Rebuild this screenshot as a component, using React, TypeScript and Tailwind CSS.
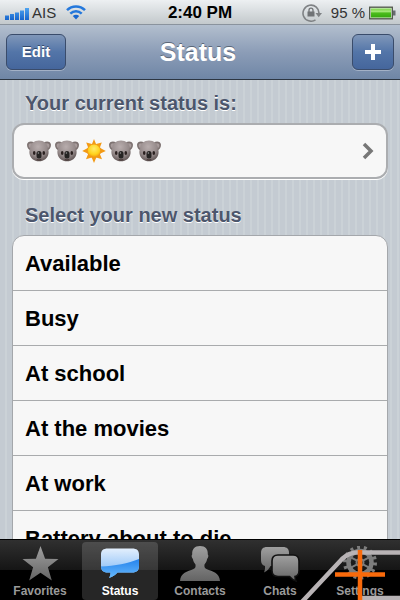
const statuses = ['Available', 'Busy', 'At school', 'At the movies', 'At work', 'Battery about to die'];

const Koala = () => (
  <svg width="26" height="24" viewBox="0 0 26 24" aria-hidden="true">
    <defs>
      <radialGradient id="fur" cx="0.45" cy="0.3" r="0.75">
        <stop offset="0" stopColor="#b8adad" />
        <stop offset="0.6" stopColor="#968b8b" />
        <stop offset="1" stopColor="#594e4d" />
      </radialGradient>
    </defs>
    <path d="M8 3.500C5.500 1.500 1 2.500 1 5.800c0 3 1.500 5.200 4 5.700zM18 3.500c2.500-2 7-1 7 2.300 0 3-1.500 5.200-4 5.700z" fill="#7d7271" />
    <path d="M7 4.800C5.200 3.600 2.600 4 2.600 6.200c0 1.500.7 2.500 1.800 3zM19 4.800c1.800-1.200 4.400-.8 4.400 1.400 0 1.500-.7 2.500-1.800 3z" fill="#a79b9b" />
    <path d="M13 1.500C8 1.500 4.800 4.300 4.200 9c-.7 1.700-1 3.500-.7 5.500.7 4.700 4.500 7.800 9.500 7.800s8.800-3.100 9.500-7.800c.3-2 0-3.800-.7-5.500C21.200 4.300 18 1.500 13 1.500z" fill="url(#fur)" />
    <ellipse cx="8.200" cy="14" rx="1.300" ry="1.900" fill="#2b2120" />
    <ellipse cx="17.800" cy="14" rx="1.300" ry="1.900" fill="#2b2120" />
    <rect x="10.500" y="12" width="5" height="7.500" rx="2.500" fill="#252322" />
    <path d="M10.800 20.500c1.300.7 3.100.7 4.400 0" stroke="#3d2c2b" strokeWidth="1" fill="none" />
    <ellipse cx="12.400" cy="13.900" rx="0.800" ry="1" fill="#777" />
  </svg>
);

const Sun = () => (
  <svg width="24" height="24" viewBox="0 0 24 24" aria-hidden="true">
    <defs>
      <radialGradient id="sun" cx="0.5" cy="0.35" r="0.6">
        <stop offset="0" stopColor="#ffec6b" />
        <stop offset="0.7" stopColor="#ffd21c" />
        <stop offset="1" stopColor="#f3a012" />
      </radialGradient>
    </defs>
    <path
      d="M12 0l2 4.900L19.800 3.500l-2 5.200L23.800 12l-6 2.800 2.200 5.500-5.700-1.800L12 23.900l-2.300-5.400L4 20.300l2.200-5.500L.2 12l6-3.300-2-5.200L10 4.900z"
      fill="#f39a14"
    />
    <circle cx="12" cy="11.800" r="6.700" fill="url(#sun)" stroke="#ef951a" strokeWidth="0.800" />
  </svg>
);

const SignalIcon = () => (
  <svg width="26" height="14" viewBox="0 0 26 14" aria-hidden="true">
    <defs>
      <linearGradient id="signal" x1="0" x2="0" y1="0" y2="1">
        <stop offset="0" stopColor="#4fa4f0" />
        <stop offset="1" stopColor="#1664cc" />
      </linearGradient>
    </defs>
    <path d="M1 9.500h4V14H1zM6 8h4v6H6zM11 6.500h4V14h-4zM16 4.500h4V14h-4zM21 2h4v12h-4z" fill="url(#signal)" />
  </svg>
);

const WifiIcon = () => (
  <svg width="20" height="15" viewBox="0 0 20 15" aria-hidden="true">
    <g fill="none" stroke="#2478dc" strokeWidth="2.500">
      <path d="M1 5.200C6 0.200 14 0.200 19 5.200" />
      <path d="M4.300 8.600c3.300-3.200 8.100-3.200 11.400 0" />
    </g>
    <path d="M10 14.500l-3.200-3.600c1.800-1.600 4.600-1.600 6.400 0z" fill="#1766cf" />
  </svg>
);

const RotationLockIcon = () => (
  <svg width="22" height="18" viewBox="0 0 22 18" aria-hidden="true">
    <path d="M14.500 15.800A8 8 0 1 1 18 9.500" fill="none" stroke="#7f8285" strokeWidth="1.600" />
    <path d="M14.500 9h6.500l-3.300 4.200z" fill="#7f8285" />
    <rect x="6.500" y="7.500" width="7" height="5" fill="#707376" />
    <path d="M8 8V6.200a2 2 0 0 1 4 0V8" fill="none" stroke="#707376" strokeWidth="1.300" />
  </svg>
);

const BatteryIcon = () => (
  <svg width="27" height="14" viewBox="0 0 27 14" aria-hidden="true">
    <defs>
      <linearGradient id="charge" x1="0" x2="0" y1="0" y2="1">
        <stop offset="0" stopColor="#7fd44c" />
        <stop offset="0.350" stopColor="#a4e878" />
        <stop offset="0.500" stopColor="#4cbd1c" />
        <stop offset="1" stopColor="#35a80d" />
      </linearGradient>
    </defs>
    <rect x="0.700" y="1.200" width="22.600" height="11.600" fill="#e5f3df" stroke="#4e5548" strokeWidth="1.300" />
    <rect x="2" y="2.500" width="20" height="9" fill="url(#charge)" />
    <path d="M24 4.500h2.500v5H24z" fill="#666b6e" />
  </svg>
);

const Gradients = () => (
  <svg className="absolute size-0" aria-hidden="true">
    <defs>
      <linearGradient id="metal" x1="0" x2="0" y1="0" y2="1">
        <stop offset="0" stopColor="#a0a0a0" />
        <stop offset="1" stopColor="#646464" />
      </linearGradient>
      <linearGradient id="bubble" x1="0" x2="0" y1="0" y2="1">
        <stop offset="0" stopColor="#e3effd" />
        <stop offset="1" stopColor="#74b3f5" />
      </linearGradient>
      <linearGradient id="bubbleShade" x1="0" x2="0" y1="0" y2="1">
        <stop offset="0" stopColor="#2583ec" />
        <stop offset="1" stopColor="#66b8fc" />
      </linearGradient>
    </defs>
  </svg>
);

const StarIcon = () => (
  <svg width="40" height="36" viewBox="0 0 40 36" aria-hidden="true">
    <path d="M20.500 0l4.600 12.700 13.400.3-10.600 8.200 3.900 13.300-11.300-7.700-11.300 7.700 3.900-13.300L2.500 13l13.400-.3z" fill="url(#metal)" />
  </svg>
);

const BubbleIcon = () => (
  <svg width="40" height="36" viewBox="0 0 40 36" aria-hidden="true">
    <path d="M8 2.500h24c5 0 7 2 7 6v11c0 5-2 7-7 7H17.500c-2 2.500-5 4.500-8.500 5.500 1-1.500 1.500-3.500 1.500-5.500H8c-5 0-7-2-7-7v-11c0-4 2-6 7-6z" fill="url(#bubble)" />
    <path d="M1 20.500c14-.5 27-3 38-7.500v6.500c0 5-2 7-7 7H17.500c-2 2.500-5 4.500-8.500 5.500 1-1.500 1.500-3.500 1.500-5.500H8c-4.500 0-6.800-2-7-6z" fill="url(#bubbleShade)" />
  </svg>
);

const ContactIcon = () => (
  <svg width="40" height="36" viewBox="0 0 40 36" aria-hidden="true">
    <path d="M20 0c5.500 0 8 3 7.800 8.500.9.700.7 3-.7 4.500-.4 2.500-1.500 4-2.600 5.500-.3 2.500 0 3.500 2 4.500 6 2.500 13 3.500 13.500 12H0c.5-8.500 7.500-9.500 13.500-12 2-1 2.300-2 2-4.500-1.100-1.500-2.200-3-2.600-5.500-1.400-1.500-1.600-3.800-.7-4.500C12 3 14.500 0 20 0z" fill="url(#metal)" />
  </svg>
);

const ChatsIcon = () => (
  <svg width="40" height="36" viewBox="0 0 40 36" aria-hidden="true">
    <path d="M7 1h16c4 0 6 2 6 6v7c0 4-2 6-6 6H10.500C9.500 22.500 7 25 4 26.500c.8-2 1.200-4 1-6.600-2.700-.6-4-2.600-4-5.900V7c0-4 2-6 6-6z" fill="url(#metal)" />
    <path d="M18 9h15c4 0 6 2 6 6v9.500c0 3.500-1.300 5.500-4 6 .1 1.500.3 3 1 4.500-3-1-5-2.500-6.500-4.500H18c-4 0-6-2-6-6V15c0-4 2-6 6-6z" fill="url(#metal)" stroke="#101010" strokeWidth="1.600" />
  </svg>
);

const GearIcon = () => (
  <svg width="40" height="36" viewBox="0 0 40 36" aria-hidden="true">
    <g fill="none" stroke="#7d7d7d">
      <circle cx="20" cy="16.500" r="15" strokeWidth="4" strokeDasharray="2.900 3.832" />
      <circle cx="20" cy="16.500" r="11.500" strokeWidth="4.500" />
      <circle cx="20" cy="16.500" r="3.500" strokeWidth="2" />
      <path d="M20 4v9M20 20v9M9 10.300l8 4.400M31 10.300l-8 4.400M9 22.700l8-4.400M31 22.700l-8-4.400" strokeWidth="2" />
    </g>
  </svg>
);

const RouteMark = () => (
  <svg className="absolute right-0 bottom-0 pointer-events-none" width="100" height="50" viewBox="0 0 100 50" aria-hidden="true">
    <path d="M0 54L42 9q7-6.500 15-6.500h43M62 48h38" fill="none" stroke="#b8b3b5" strokeWidth="4.500" />
    <path d="M60 0v50M35 24.500h50" stroke="#f96a0b" strokeWidth="4.500" />
  </svg>
);

const tabs = [
  { label: 'Favorites', icon: StarIcon },
  { label: 'Status', icon: BubbleIcon, active: true },
  { label: 'Contacts', icon: ContactIcon },
  { label: 'Chats', icon: ChatsIcon },
  { label: 'Settings', icon: GearIcon },
];

const StatusBar = () => (
  <div className="grid h-6 shrink-0 grid-cols-[1fr_auto_1fr] items-center bg-linear-to-b from-[#edf0f2] to-[#c3c9cc] pr-1 pl-1 text-[15px] text-[#333]">
    <div className="flex items-center gap-0.5">
      <SignalIcon />
      <span>AIS</span>
      <span className="pl-2"><WifiIcon /></span>
    </div>
    <time className="text-[17px] font-bold text-black">2:40 PM</time>
    <div className="flex items-center justify-end gap-1">
      <RotationLockIcon />
      <span className="pl-1">95 %</span>
      <BatteryIcon />
    </div>
  </div>
);

const navButton =
  'flex h-9 items-center justify-center rounded-md border border-[#3a4c6b] bg-linear-to-b from-[#8097b9] via-[#5375a8] to-[#45669c] text-white shadow-[0_1px_0_#a3b1c6] [text-shadow:0_-1px_0_#33496b]';

const NavBar = () => (
  <header className="grid h-14 shrink-0 grid-cols-[1fr_auto_1fr] items-center border-t border-b border-t-[#8a939d] border-b-[#2d3642] bg-linear-to-b from-[#b3bfce] via-[#8c9db7] to-[#6f86a6] px-1.5">
    <button className={`${navButton} w-15 text-[15px] font-bold`}>Edit</button>
    <h1 className="pr-1 text-[25px] leading-7 font-bold text-white [text-shadow:0_-1px_0_#5a6778]">Status</h1>
    <button aria-label="Add status" className={`${navButton} w-[42px] justify-self-end`}>
      <svg width="18" height="18" viewBox="0 0 18 18" aria-hidden="true">
        <path d="M9 1v16M1 9h16" stroke="white" strokeWidth="4" />
      </svg>
    </button>
  </header>
);

const TabBar = () => (
  <nav className="relative grid h-[61px] shrink-0 grid-cols-5 border-t border-black bg-[linear-gradient(#303030,#151515_50%,#000_50%)]">
    {tabs.map(({ label, icon: Icon, active }) => (
      <button
        key={label}
        className={`m-0.5 flex flex-col items-center rounded-sm pt-1 text-xs leading-[18px] font-bold ${active ? 'bg-white/15 text-white' : 'text-[#9a9a9a]'}`}
      >
        <Icon />
        {label}
      </button>
    ))}
    <RouteMark />
  </nav>
);

export default function App() {
  return (
    <div className="flex h-screen flex-col overflow-hidden font-['Liberation_Sans',Arial,sans-serif]">
      <Gradients />
      <StatusBar />
      <NavBar />
      <main className="min-h-0 flex-1 overflow-y-auto bg-[repeating-linear-gradient(90deg,#c4cbd2_0px,#c4cbd2_5px,#cbd2d7_5px,#cbd2d7_7px)] px-3 [scrollbar-width:none]">
        <h2 className="px-[13px] pt-[11px] pb-2 text-xl leading-6 font-bold text-[#4c566c] [text-shadow:0_1px_0_white]">Your current status is:</h2>
        <button className="flex h-14 w-full items-center justify-between rounded-xl border-2 border-[#abadb0] bg-[#f7f7f7] px-3 shadow-[0_1px_0_white]">
          <span className="flex items-center gap-0.5" role="img" aria-label="koala koala sun koala koala">
            <Koala />
            <Koala />
            <Sun />
            <Koala />
            <Koala />
          </span>
          <svg width="12" height="18" viewBox="0 0 12 18" aria-hidden="true">
            <path d="M2 2l7 7-7 7" fill="none" stroke="#777" strokeWidth="3.500" />
          </svg>
        </button>
        <h2 className="px-[13px] pt-6 pb-2 text-xl leading-6 font-bold text-[#4c566c] [text-shadow:0_1px_0_white]">Select your new status</h2>
        <ul className="rounded-xl border border-[#a4a7ab] bg-[#f7f7f7]">
          {statuses.map((status) => (
            <li key={status} className="border-b border-[#a9abad] last:border-b-0">
              <button className="h-[54px] w-full px-3 text-left text-[22px] font-bold text-black">{status}</button>
            </li>
          ))}
        </ul>
      </main>
      <TabBar />
    </div>
  );
}
